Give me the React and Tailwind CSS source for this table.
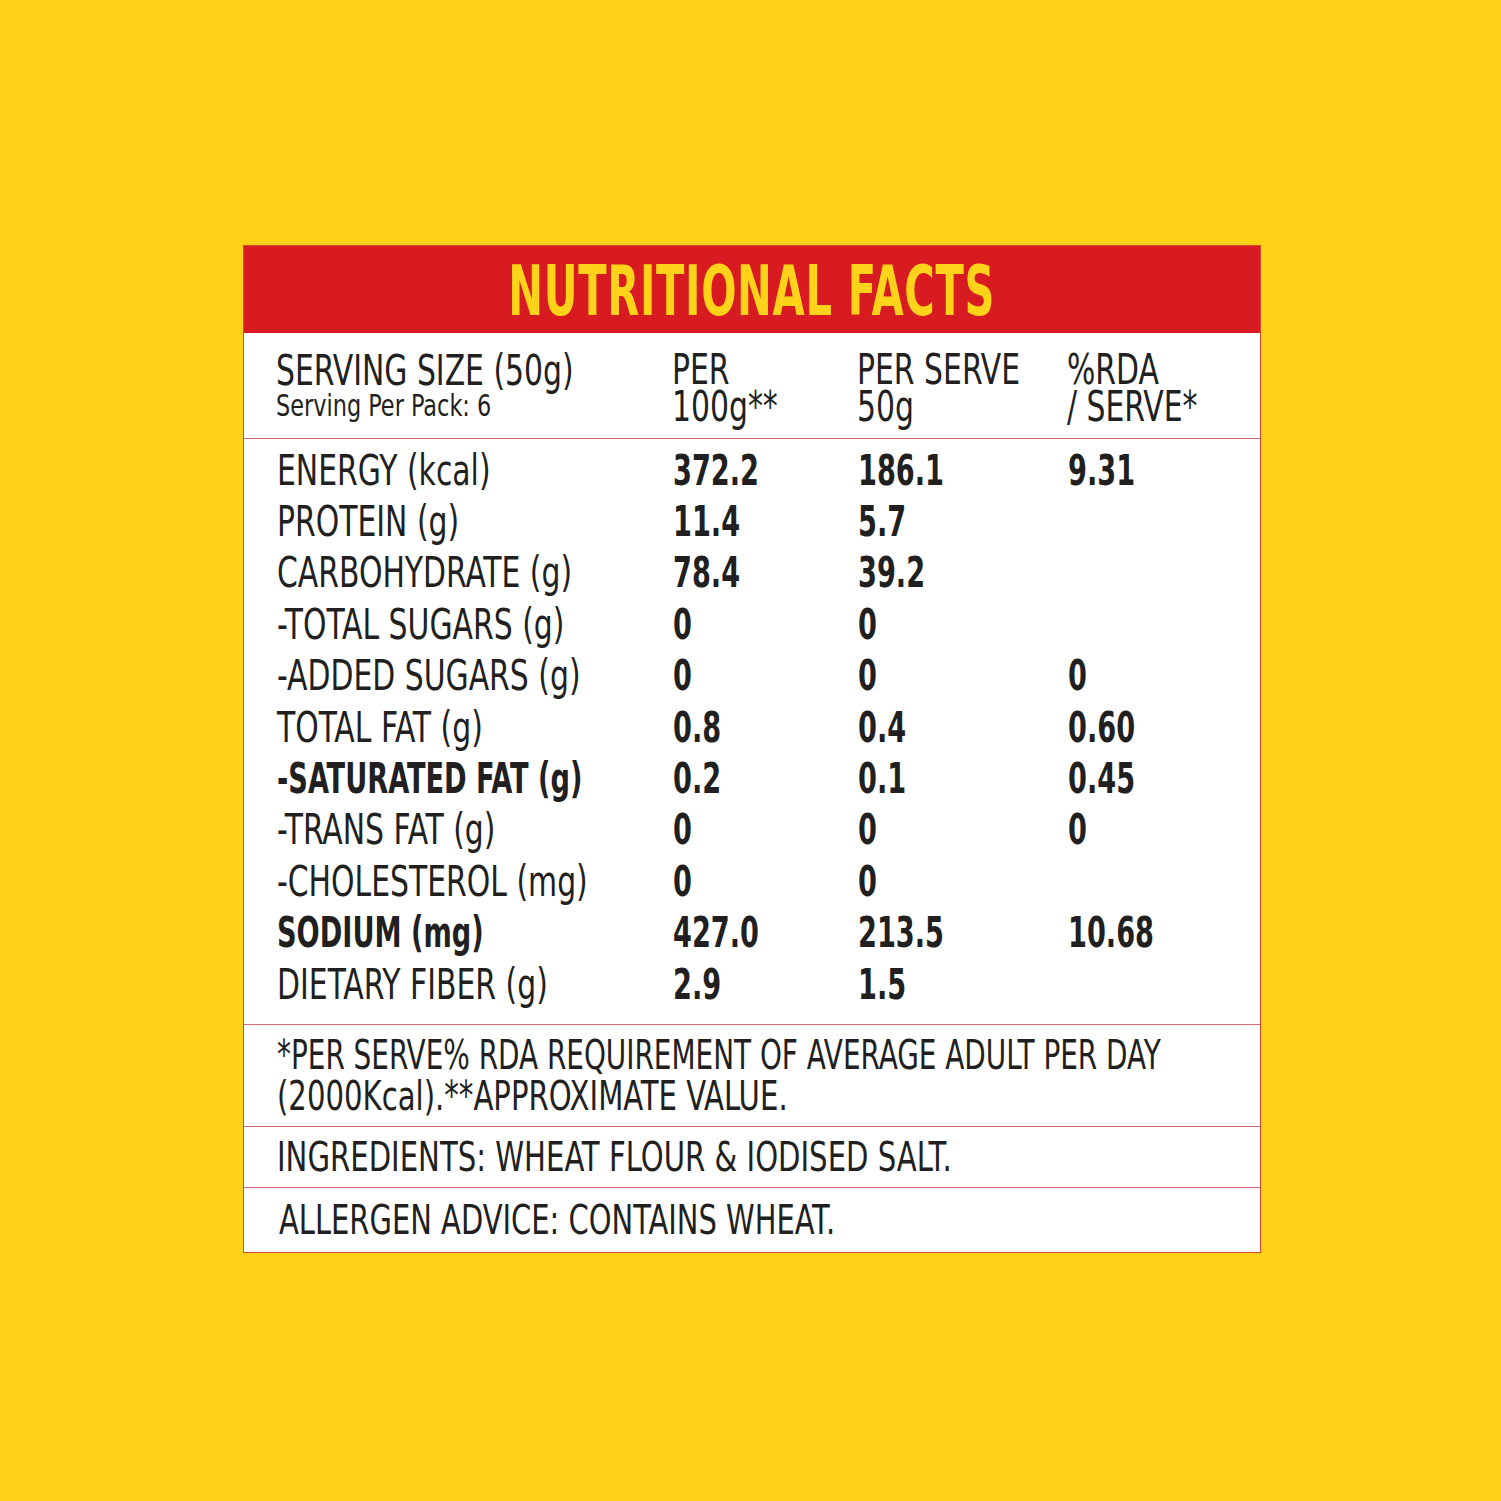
import React from "react";

const rows = [
  ["ENERGY (kcal)", "372.2", "186.1", "9.31", false],
  ["PROTEIN (g)", "11.4", "5.7", "", false],
  ["CARBOHYDRATE (g)", "78.4", "39.2", "", false],
  ["-TOTAL SUGARS (g)", "0", "0", "", false],
  ["-ADDED SUGARS (g)", "0", "0", "0", false],
  ["TOTAL FAT (g)", "0.8", "0.4", "0.60", false],
  ["-SATURATED FAT (g)", "0.2", "0.1", "0.45", true],
  ["-TRANS FAT (g)", "0", "0", "0", false],
  ["-CHOLESTEROL (mg)", "0", "0", "", false],
  ["SODIUM (mg)", "427.0", "213.5", "10.68", true],
  ["DIETARY FIBER (g)", "2.9", "1.5", "", false],
];

const font = { fontFamily: '"Liberation Sans Narrow", "DejaVu Sans Condensed", "Liberation Sans", sans-serif' };

function T({ children, className = "scale-x-[0.79]" }) {
  return <span className={"inline-block origin-left whitespace-nowrap " + className}>{children}</span>;
}
function B({ children }) {
  return <span className="inline-block origin-left scale-x-[0.72] whitespace-nowrap font-bold">{children}</span>;
}

export default function App() {
  return (
    <div className="w-[1501px] h-[1501px] bg-[#fdd116] pt-[245px] pl-[243px]" style={font}>
      <div className="w-[1018px] bg-white border border-[#e0452e] flex flex-col text-[#221f20]">
        <div className="h-[87px] bg-[#d71b20] flex items-center justify-center">
          <span className="inline-block text-[#ffd31a] text-[70px] font-bold leading-none tracking-[1px] scale-x-[0.66] mt-[2px] whitespace-nowrap">NUTRITIONAL FACTS</span>
        </div>
        <div className="h-[106px] grid grid-cols-[396px_185px_210px_1fr] pl-[32px] pt-[18px] border-b border-[#d76a74]">
          <div className="flex flex-col leading-none">
            <span className="text-[42px] leading-[40px]"><T>SERVING SIZE (50g)</T></span>
            <span className="text-[30px] leading-[30px]"><T className="scale-x-[0.83]">Serving Per Pack: 6</T></span>
          </div>
          <div className="text-[42px] leading-[37px] flex flex-col"><T>PER</T><T>100g**</T></div>
          <div className="text-[42px] leading-[37px] flex flex-col"><T>PER SERVE</T><T>50g</T></div>
          <div className="text-[42px] leading-[37px] flex flex-col"><T>%RDA</T><T>/ SERVE*</T></div>
        </div>
        <div className="flex flex-col pl-[33px] pt-[6px] pb-[14px] border-b border-[#d76a74]">
          {rows.map((r) => (
            <div key={r[0]} className="grid grid-cols-[396px_185px_210px_1fr] h-[51.4px] items-center text-[42px] leading-none">
              <span>{r[4] ? <B>{r[0]}</B> : <T>{r[0]}</T>}</span>
              <span><B>{r[1]}</B></span>
              <span><B>{r[2]}</B></span>
              <span><B>{r[3]}</B></span>
            </div>
          ))}
        </div>
        <div className="h-[102px] pl-[33px] pt-[10px] text-[40px] leading-[41px] border-b border-[#d76a74] flex flex-col">
          <T className="scale-x-[0.775]">*PER SERVE% RDA REQUIREMENT OF AVERAGE ADULT PER DAY</T>
          <T className="scale-x-[0.81]">(2000Kcal).**APPROXIMATE VALUE.</T>
        </div>
        <div className="h-[61px] pl-[33px] flex items-center text-[40px] border-b border-[#d76a74]">
          <T className="scale-x-[0.81]">INGREDIENTS: WHEAT FLOUR &amp; IODISED SALT.</T>
        </div>
        <div className="h-[64px] pl-[35px] flex items-center text-[40px]">
          <T className="scale-x-[0.805]">ALLERGEN ADVICE: CONTAINS WHEAT.</T>
        </div>
      </div>
    </div>
  );
}
